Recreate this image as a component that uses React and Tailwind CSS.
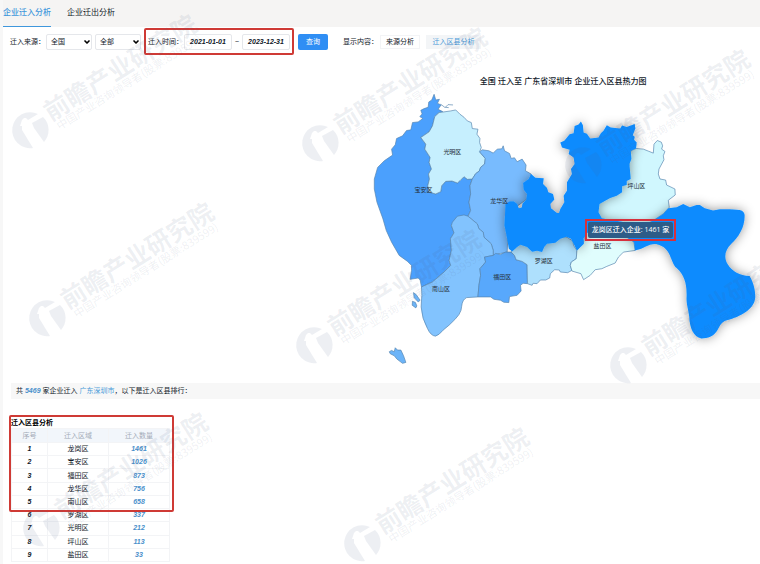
import React, { useState } from 'react';
import { ChevronDown } from 'lucide-react';

const rows = [
  { name: '龙岗区', count: 1461 },
  { name: '宝安区', count: 1026 },
  { name: '福田区', count: 873 },
  { name: '龙华区', count: 756 },
  { name: '南山区', count: 658 },
  { name: '罗湖区', count: 337 },
  { name: '光明区', count: 212 },
  { name: '坪山区', count: 113 },
  { name: '盐田区', count: 33 },
];

const districts = [
  {
    name: '宝安区',
    fill: '#4ba0fd',
    label: [188, 338],
    d: 'M220 45L213 62L204 68L202 84L190 88L180 93L184 104L177 112L186 118L172 128L155 130L150 152L137 154L125 170L107 178L103 197L92 210L95 228L70 245L50 265L40 300L40 330L48 370L66 420L76 455L92 490L115 530L140 548L152 560L152 575L148 602L172 598L178 604L182 625L215 610L250 580L270 560L265 545L272 515L269 480L280 462L272 440L285 418L322 412L330 395L325 370L330 345L328 320L335 300L320 301L310 293L298 305L290 312L274 306L255 307L243 320L240 338L225 345L205 340L201 320L206 300L203 285L212 270L205 250L208 235L192 210L195 195L180 175L205 158L215 140L222 112L235 100L246 97L232 90L241 77L230 72L236 60L225 62Z',
  },
  {
    name: '光明区',
    fill: '#c6effe',
    label: [275, 224],
    d: 'M222 112L235 100L270 95L285 92L298 105L310 114L320 125L332 130L335 148L352 150L349 165L358 178L357 190L362 205L357 218L365 228L374 238L372 255L360 265L356 276L345 284L335 300L320 301L310 293L298 305L290 312L274 306L255 307L243 320L240 338L225 345L205 340L201 320L206 300L203 285L212 270L205 250L208 235L192 210L195 195L180 175L205 158L215 140Z',
  },
  {
    name: '龙华区',
    fill: '#78bbfe',
    label: [416, 371],
    d: 'M357 218L365 212L385 215L398 222L410 210L424 209L428 200L432 215L447 223L452 238L462 236L470 248L485 240L497 258L495 275L512 285L500 360L445 400L440 520L420 524L398 530L398 515L392 495L370 475L368 460L355 450L350 435L322 412L330 395L325 370L330 345L328 320L335 300L345 284L356 276L360 265L372 255L374 238Z',
  },
  {
    name: '南山区',
    fill: '#82c3fe',
    label: [241, 636],
    d: 'M322 412L310 408L290 412L275 430L272 440L280 462L269 480L272 515L265 545L270 560L250 580L215 610L182 625L183 650L181 685Q183 720 200 750Q210 772 224 773Q235 770 247 755L265 740Q285 722 295 708Q303 695 303 683Q305 663 318 657L352 655L355 620L360 590L358 570L375 550L372 535L398 530L398 515L392 495L370 475L368 460L355 450L350 435Z',
  },
  {
    name: '福田区',
    fill: '#58a8fc',
    label: [425, 601],
    d: 'M372 535L398 530L405 524L420 527L435 520L452 520L462 530L467 543L485 548L500 558L501 615L488 614L480 620L482 637L470 650L447 654L445 672L430 671L420 665L400 662L390 655L352 655L355 620L360 590L358 570L375 550Z',
  },
  {
    name: '罗湖区',
    fill: '#aee0fd',
    label: [550, 553],
    d: 'M452 520L465 490L560 470L620 475L638 487L640 500L650 515L648 540L633 550L630 560L635 575L622 582L600 580L597 574L583 573L570 585L568 598L556 604L540 604L530 615L518 614L515 620L501 615L500 558L485 548L467 543L462 530Z',
  },
  {
    name: '盐田区',
    fill: '#e0fdfd',
    label: [727, 509],
    d: 'M635 577L662 585L670 603L690 590L705 573L725 570L740 563L765 553L775 535L790 520L825 515L822 490L800 475L720 430L680 430L670 490L650 515L648 540L633 550L630 560Z',
  },
  {
    name: '坪山区',
    fill: '#d0f7fe',
    label: [829, 326],
    d: 'M812 215L828 208L850 210L865 216L880 222L882 195L892 184L904 189L908 200L905 210L915 217L910 230L912 242L897 270L895 285L900 300L917 303L920 318L945 330L946 348L925 364L928 385L910 405L880 425L850 440L780 440L740 430L705 415L715 370L760 350L800 300Z',
  },
];

const longgang =
  'M435 375L447 368L460 368L470 375L475 388L484 386L486 374L498 362L500 345L490 332L488 312L505 300L512 285L525 296L550 298L548 315L560 327L564 340L578 345L582 362L570 375L572 388L590 402L596 402L600 390L612 370L610 350L620 335L620 310L635 285L632 270L643 255L640 235L625 225L628 212L605 205L600 190L612 185L628 165L640 162L643 140L655 136L662 127L668 138L670 160L680 164L690 178L715 175L722 162L730 155L740 138L752 145L780 148L786 139L800 143L824 134L826 148L818 168L824 173L822 182L830 190L828 208L812 215L814 240L808 255L812 300L800 306L800 318L786 322L786 340L770 350L750 357L718 375L715 400L725 418L850 440L880 425L910 405L925 388L950 385L970 375L990 385L1010 378L1020 378L1035 388L1060 395L1080 391L1110 391L1140 393Q1155 397 1155 410C1155 450 1135 475 1115 495C1095 515 1092 535 1103 555C1118 580 1140 590 1170 592C1180 610 1187 630 1187 655C1185 690 1150 710 1110 723C1085 727 1082 740 1072 757C1060 775 1045 780 1025 780C1000 775 990 750 988 715C985 690 980 680 980 660C982 620 975 590 950 568C930 550 935 505 890 496C865 494 850 512 825 515L822 490L800 475L685 458L670 478L671 495L650 515L640 495L632 480L618 474L600 480L585 492L560 495L552 504L545 520L530 516L515 519L500 505L480 498L470 505L455 518L445 510L440 480L432 440Z';

const islands = [
  'M158 642L166 648L178 665L172 670L160 657Z',
  'M155 668L164 672L168 682L165 688L154 680Z',
  'M85 820L92 816L100 820L103 808L110 815L120 815L128 832L135 852L125 855L108 842L100 832L88 826Z',
];

const watermarks = [
  [30, 130], [47, 318], [41, 528],
  [320, 143], [314, 345], [362, 543],
  [583, 165], [628, 365],
];

const Watermark = () => (
  <svg
    aria-hidden="true"
    className="absolute inset-y-0 left-[-3px] w-full h-full overflow-visible pointer-events-none font-['Noto_Sans_CJK_SC',sans-serif]"
    fill="#505f85"
    fillOpacity="0.1"
  >
    {watermarks.map(([x, y]) => (
      <g key={`${x}-${y}`} transform={`translate(${x} ${y})`}>
        <path d="M8-16A18 18 0 1 0 3 18L-8 0L-8-4L-10-4L-8-10L-6-12L-4-12L-2-10Z" />
        <path d="M13-13A18 18 0 0 1 14 12L4-2L2-7Z" />
        <g transform="rotate(-32)">
          <text x="22" y="4" fontSize="25" fontWeight="700">前瞻产业研究院</text>
          <text x="25" y="16" fontSize="11" fontWeight="400">中国产业咨询领导者(股票:839599)</text>
        </g>
      </g>
    ))}
  </svg>
);

const FilterSelect = ({ label, options }) => (
  <div className="relative">
    <select
      aria-label={label}
      className="appearance-none block w-[46px] h-4 pl-1 border border-gray-200 rounded-xs bg-white text-[7px] leading-3 text-gray-900"
    >
      {options.map((o) => <option key={o}>{o}</option>)}
    </select>
    <ChevronDown className="absolute right-px top-1 h-2 w-2 text-black pointer-events-none" strokeWidth={5} />
  </div>
);

const DateInput = ({ label, value, onChange }) => (
  <input
    type="text"
    aria-label={label}
    value={value}
    onChange={(e) => onChange(e.target.value)}
    className="w-12 h-4 border border-gray-200 rounded-xs bg-white text-center text-[7px] font-bold italic text-gray-900"
  />
);

const HeatMap = () => (
  <figure className="w-[52%] ml-auto">
    <figcaption className="text-center text-[8px] leading-3 font-medium text-gray-900">
      全国 迁入至 广东省深圳市 企业迁入区县热力图
    </figcaption>
    <div className="relative mt-1">
      <svg viewBox="15 38 1185 852" className="block w-full" strokeLinejoin="round">
        <defs>
          <filter id="lift" x="-20%" y="-20%" width="140%" height="140%">
            <feDropShadow dx="0" dy="0" stdDeviation="16" floodColor="#000" floodOpacity="0.4" />
          </filter>
        </defs>
        <g stroke="#5584ad" strokeWidth="2">
          {districts.map((d) => <path key={d.name} d={d.d} fill={d.fill} />)}
          {islands.map((d) => <path key={d} d={d} fill="#6cb4f8" />)}
          <path d="M240 75L252 84L264 85M254 84L262 76L277 77" fill="none" />
        </g>
        <path d={longgang} fill="#0c8bfe" filter="url(#lift)" />
        <g fontSize="18" fill="#26303a" textAnchor="middle">
          {districts.map((d) => (
            <text key={d.name} x={d.label[0]} y={d.label[1]}>{d.name}</text>
          ))}
        </g>
      </svg>
      {/* Tooltip */}
      <div className="absolute left-[55.5%] top-[45%] border-2 border-[#d6303c] p-px">
        <div className="bg-[#2d5c88] px-1 text-[7px] leading-4 font-medium text-white whitespace-nowrap rounded-xs font-['Open_Sans','Noto_Sans_CJK_SC',sans-serif]">
          龙岗区迁入企业: 1461 家
        </div>
      </div>
    </div>
  </figure>
);

const RankTable = () => (
  <section className="relative w-[159px] ml-2 mt-[18px]">
    <h2 className="text-[7px] leading-[11px] font-bold text-black">迁入区县分析</h2>
    <table className="w-full h-[134px] table-fixed border-collapse text-center text-[7px] leading-[10px] text-gray-900">
      <thead>
        <tr className="h-[14px] bg-[#f2f6fb] text-[#a3abb8]">
          <th className="w-9 p-0 font-normal border border-gray-100">序号</th>
          <th className="p-0 font-normal border border-gray-100">迁入区域</th>
          <th className="p-0 font-normal border border-gray-100">迁入数量</th>
        </tr>
      </thead>
      <tbody>
        {rows.map((row, idx) => (
          <tr key={row.name}>
            <td className="p-0 border border-gray-100 font-bold italic">{idx + 1}</td>
            <td className="p-0 border border-gray-100">{row.name}</td>
            <td className="p-0 border border-gray-100 font-bold italic text-[#4a90cb]">{row.count}</td>
          </tr>
        ))}
      </tbody>
    </table>
    {/* Highlight round the top five */}
    <div className="absolute -left-[2px] -right-1 -top-[2px] h-[97px] border-2 border-[#cf3a35] rounded-xs pointer-events-none"></div>
  </section>
);

const App = () => {
  const [tab, setTab] = useState('in');
  const [start, setStart] = useState('2021-01-01');
  const [end, setEnd] = useState('2023-12-31');

  const tabClass = (id) =>
    tab === id
      ? 'h-full border-b border-[#3f97dc] text-[#3f97dc] font-medium'
      : 'h-full border-b border-transparent text-gray-900';

  return (
    <div className="relative min-h-screen overflow-hidden bg-white border-l-3 border-[#f7f7f7] font-['Liberation_Sans','Noto_Sans_CJK_SC',sans-serif]">
      {/* Tabs */}
      <nav className="flex gap-4 h-[27px] bg-[#f5f4f3] text-[8px]">
        <button onClick={() => setTab('in')} className={tabClass('in')}>企业迁入分析</button>
        <button onClick={() => setTab('out')} className={tabClass('out')}>企业迁出分析</button>
      </nav>

      {/* Filters */}
      <form onSubmit={(e) => e.preventDefault()} className="flex items-center pl-[7px] pt-px text-[7px] leading-4 text-gray-900">
        <span className="w-9 whitespace-nowrap">迁入来源：</span>
        <div className="flex gap-[3px]">
          <FilterSelect label="来源省份" options={['全国']} />
          <FilterSelect label="来源城市" options={['全部']} />
        </div>
        <div className="flex items-center ml-[3px] h-[27px] px-[2px] border-2 border-[#cf3a35] rounded-xs">
          <span className="w-9 whitespace-nowrap">迁入时间：</span>
          <DateInput label="开始日期" value={start} onChange={setStart} />
          <span className="w-[10px] text-center">~</span>
          <DateInput label="结束日期" value={end} onChange={setEnd} />
        </div>
        <button type="submit" className="ml-1 w-[30px] h-4 rounded-xs bg-[#2f8ef4] text-white">查询</button>
        <span className="ml-[15px] w-[37px] whitespace-nowrap">显示内容：</span>
        <button type="button" className="w-10 h-[14px] leading-3 border border-gray-100">来源分析</button>
        <button type="button" className="ml-[6px] w-[55px] h-[14px] leading-3 bg-[#f3f5f7] text-[#4a9ad8]">迁入区县分析</button>
      </form>

      <main className="pt-[21px]">
        <HeatMap />
        <p className="ml-2 mt-2 h-4 px-[5px] bg-[#f7f7f7] text-[7px] leading-4 text-gray-900">
          共 <b className="italic text-[#4a90cb]">5469</b> 家企业迁入 <a href="#shenzhen" className="text-[#4a9ad8]">广东深圳市</a>，以下是迁入区县排行：
        </p>
        <RankTable />
      </main>

      <Watermark />
    </div>
  );
};

export default App;
